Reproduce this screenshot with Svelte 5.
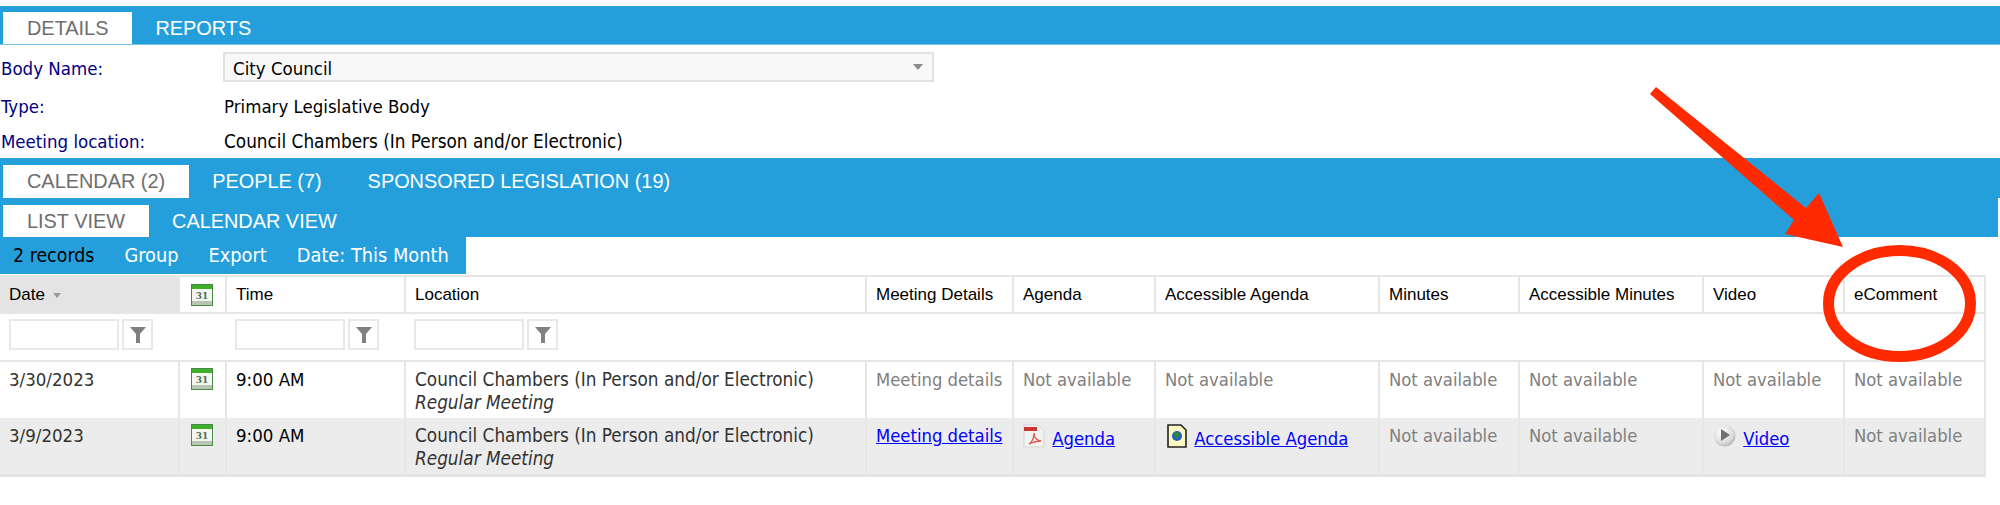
<script>
  const columns = [
    { key: "date", label: "Date", width: 179 },
    { key: "cal", label: "", width: 47 },
    { key: "time", label: "Time", width: 179 },
    { key: "location", label: "Location", width: 461 },
    { key: "details", label: "Meeting Details", width: 147 },
    { key: "agenda", label: "Agenda", width: 142 },
    { key: "access", label: "Accessible Agenda", width: 224 },
    { key: "minutes", label: "Minutes", width: 140 },
    { key: "accmin", label: "Accessible Minutes", width: 184 },
    { key: "video", label: "Video", width: 141 },
    { key: "ecomment", label: "eComment", width: 141 }
  ];

  const rows = [
    { date: "3/30/2023", live: false },
    { date: "3/9/2023", live: true }
  ];
</script>

{#snippet calIcon()}
  <svg class="cal" width="22" height="22" viewBox="0 0 22 22" aria-hidden="true">
    <rect x="0.5" y="0.5" width="21" height="21" fill="#f4f6f2" stroke="#4a8a45" />
    <rect x="1" y="1" width="20" height="4" fill="#3fae2a" />
    <rect x="1" y="17" width="20" height="4" fill="#b9c4b4" />
    <text x="11" y="15" text-anchor="middle" class="cal-num">31</text>
  </svg>
{/snippet}

{#snippet funnel()}
  <svg width="16" height="18" viewBox="0 0 16 18" aria-hidden="true">
    <path d="M0 1h16L10 8v9H6V8z" fill="#808080" />
  </svg>
{/snippet}

<div class="page">
  <div class="bar top">
    <span class="tab on">DETAILS</span>
    <span class="tab">REPORTS</span>
  </div>

  <div class="info">
    <div class="label first">Body Name:</div>
    <div class="select">City Council<span class="caret"></span></div>
    <div class="label">Type:</div>
    <div>Primary Legislative Body</div>
    <div class="label">Meeting location:</div>
    <div class="wide">Council Chambers (In Person and/or Electronic)</div>
  </div>

  <div class="bar second">
    <span class="tab on">CALENDAR (2)</span>
    <span class="tab">PEOPLE (7)</span>
    <span class="tab">SPONSORED LEGISLATION (19)</span>
  </div>
  <div class="bar third">
    <span class="tab on">LIST VIEW</span>
    <span class="tab">CALENDAR VIEW</span>
  </div>
  <div class="tools">
    <span class="count">2 records</span>
    <span>Group</span>
    <span>Export</span>
    <span>Date: This Month</span>
  </div>

  <table>
    <colgroup>
      {#each columns as c}<col style="width: {c.width}px" />{/each}
    </colgroup>
    <thead>
      <tr class="heads">
        {#each columns as c}
          <th class:sorted={c.key === "date"}>
            {#if c.key === "cal"}
              {@render calIcon()}
            {:else}
              {c.label}{#if c.key === "date"}<span class="sort"></span>{/if}
            {/if}
          </th>
        {/each}
      </tr>
      <tr class="filters">
        <td><span class="filter"><span class="box"></span><span class="go">{@render funnel()}</span></span></td>
        <td></td>
        <td><span class="filter"><span class="box"></span><span class="go">{@render funnel()}</span></span></td>
        <td><span class="filter"><span class="box"></span><span class="go">{@render funnel()}</span></span></td>
        <td colspan="7"></td>
      </tr>
    </thead>
    <tbody>
      {#each rows as r}
        <tr class:alt={r.live}>
          <td>{r.date}</td>
          <td>{@render calIcon()}</td>
          <td class="time">9:00 AM</td>
          <td class="wide">Council Chambers (In Person and/or Electronic)<br /><em>Regular Meeting</em></td>
          {#if r.live}
            <td><a href="#details">Meeting details</a></td>
            <td class="linked">
              <svg class="doc" width="22" height="24" viewBox="0 0 22 24" aria-hidden="true">
                <path d="M1 1h14l6 6v16H1z" fill="#f2f2f2" stroke="#d4d4d4" />
                <rect x="1" y="3" width="13" height="4" fill="#c8362e" />
                <path d="M6 20c3-2 5-6 5-11 0 4 2 7 7 8-4 0-8 1-12 3z" fill="none" stroke="#e0574e" stroke-width="1.3" />
              </svg>
              <a href="#agenda">Agenda</a>
            </td>
            <td class="linked">
              <svg class="doc access" width="20" height="24" viewBox="0 0 20 24" aria-hidden="true">
                <path d="M1 1h13l5 5v17H1z" fill="#fbf8c4" stroke="#222" stroke-width="1.6" />
                <circle cx="10" cy="12" r="5" fill="#1f5fc4" />
                <path d="M7 9l4-1 2 3-2 2 0 3-3-3z" fill="#2f8f2f" />
              </svg>
              <a href="#accessible">Accessible Agenda</a>
            </td>
          {:else}
            <td class="na">Meeting details</td>
            <td class="na">Not available</td>
            <td class="na">Not available</td>
          {/if}
          <td class="na">Not available</td>
          <td class="na">Not available</td>
          {#if r.live}
            <td class="linked">
              <svg class="doc" width="23" height="23" viewBox="0 0 23 23" aria-hidden="true">
                <defs>
                  <radialGradient id="ball" cx="0.4" cy="0.35" r="0.75">
                    <stop offset="0" stop-color="#ffffff" />
                    <stop offset="0.65" stop-color="#dcdcdc" />
                    <stop offset="1" stop-color="#a4a4a4" />
                  </radialGradient>
                </defs>
                <circle cx="11.5" cy="11.5" r="11" fill="url(#ball)" />
                <path d="M8 5l9 6-9 6z" fill="#707070" />
              </svg>
              <a href="#video">Video</a>
            </td>
          {:else}
            <td class="na">Not available</td>
          {/if}
          <td class="na">Not available</td>
        </tr>
      {/each}
    </tbody>
  </table>

  <!-- red annotation drawn over the screenshot -->
  <svg class="note" width="2000" height="505" viewBox="0 0 2000 505" aria-hidden="true">
    <path d="M1650 94 1656 87 1806 208 1819 193 1843 247 1785 234 1794 220z" fill="#ff2a00" />
    <ellipse cx="1899.5" cy="303.5" rx="71" ry="53" fill="none" stroke="#ff2a00" stroke-width="11" />
  </svg>
</div>

<style>
  :global(body) { margin: 0; background: #fff; }

  .page {
    position: relative;
    width: 2000px;
    height: 505px;
    overflow: hidden;
    padding-top: 6px;
    box-sizing: border-box;
    font-family: "DejaVu Sans Condensed", "DejaVu Sans", sans-serif;
    font-size: 18.5px;
    color: #000;
  }
  .wide { font-size: 18.8px; }

  .bar {
    display: flex;
    background: #259fdb;
    font-family: "Liberation Sans", Arial, sans-serif;
    font-size: 19.9px;
    color: #fff;
    padding-left: 3px;
  }
  .tab { display: flex; align-items: center; height: 32px; padding: 0 23px; }
  .tab.on { background: #fff; color: #6e6e6e; padding: 0 24px; }
  .top { height: 39px; align-items: flex-end; border-bottom: 1px solid #7cc3e8; box-sizing: border-box; }
  .second { height: 40px; align-items: flex-end; }
  .second .tab { height: 33px; }
  .third { height: 39px; margin-right: 2px; align-items: flex-end; }

  .info {
    display: grid;
    grid-template-columns: 223px 710px;
    grid-template-rows: 44px 35px 34px;
    align-items: center;
    height: 113px;
    padding-left: 1px;
    box-sizing: border-box;
  }
  .info .label { color: #000080; }
  .info .first { padding-top: 3px; }
  .select {
    position: relative;
    height: 30px;
    margin-left: -1px;
    padding: 3px 0 0 8px;
    background: #f8f8f8;
    border: 2px solid #e2e2e2;
    box-sizing: border-box;
    display: flex;
    align-items: center;
  }
  .caret {
    position: absolute;
    right: 9px;
    top: 10px;
    border: 5px solid transparent;
    border-top: 6px solid #8a8a8a;
  }

  .tools {
    display: flex;
    gap: 30px;
    align-items: center;
    width: 466px;
    height: 37px;
    padding-left: 13px;
    box-sizing: border-box;
    background: #259fdb;
    color: #fff;
    font-size: 19.8px;
  }
  .count { color: #000; font-size: 19.4px; }

  table {
    table-layout: fixed;
    width: 1985px;
    border-collapse: collapse;
    margin-top: 1px;
  }
  th, td {
    border-left: 2px solid #e6e6e6;
    padding: 0 0 0 9px;
    text-align: left;
    vertical-align: top;
    box-sizing: border-box;
    overflow: visible;
    white-space: nowrap;
  }
  th:first-child, td:first-child { border-left: none; }
  th:last-child, td:last-child { border-right: 2px solid #e6e6e6; }

  .heads th {
    height: 37px;
    vertical-align: middle;
    font-family: "Liberation Sans", Arial, sans-serif;
    font-weight: 400;
    font-size: 17px;
    border-top: 2px solid #e6e6e6;
    border-bottom: 2px solid #e6e6e6;
  }
  .heads th.sorted { background: #e4e4e4; }
  .sort {
    display: inline-block;
    margin-left: 8px;
    vertical-align: 2px;
    border: 4px solid transparent;
    border-top: 5px solid #9a9a9a;
    border-bottom: none;
  }

  .filters td { height: 48px; border-left: none; border-bottom: 2px solid #e6e6e6; vertical-align: top; padding-top: 5px; }
  .filters td:last-child { border-right: 2px solid #e6e6e6; }
  .filter { display: flex; gap: 3px; }
  .box { width: 110px; height: 31px; border: 2px solid #e8e8e8; box-sizing: border-box; }
  .go {
    width: 31px;
    height: 31px;
    border: 2px solid #e8e8e8;
    box-sizing: border-box;
    display: flex;
    align-items: center;
    justify-content: center;
  }

  tbody tr { height: 57px; }
  tbody td { padding-top: 6px; line-height: 23px; color: #333; }
  tbody td.time { color: #000; }
  tbody td.na { color: #808080; font-size: 18.3px; }
  tbody tr.alt td { background: #ececec; }
  tbody tr:last-child td { border-bottom: 3px solid #e4e4e4; }
  em { font-style: italic; }
  a { color: #0000ff; text-decoration: underline; font-size: 18.3px; }

  .cal { display: block; margin: 0 0 0 2px; }
  .cal-num { font-family: "DejaVu Serif", serif; font-size: 9px; font-weight: 700; fill: #4f6f5f; }

  td.linked { padding-top: 6px; }
  td.linked a { position: relative; top: 3px; margin-left: 2px; }
  .doc { vertical-align: top; }
  .access { margin-left: 2px; }

  .note { position: absolute; left: 0; top: 0; pointer-events: none; }
</style>
